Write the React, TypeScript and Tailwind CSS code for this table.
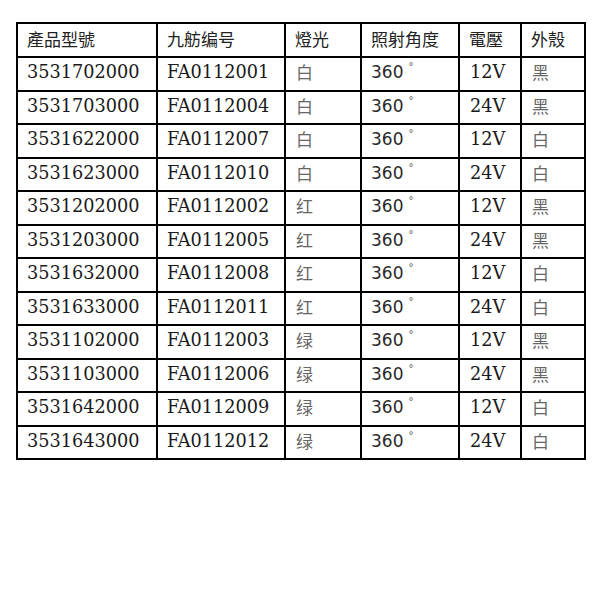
import React from 'react';

const rows: [string, string, string, string, string][] = [
  ['3531702000', 'FA0112001', '白', '12V', '黑'],
  ['3531703000', 'FA0112004', '白', '24V', '黑'],
  ['3531622000', 'FA0112007', '白', '12V', '白'],
  ['3531623000', 'FA0112010', '白', '24V', '白'],
  ['3531202000', 'FA0112002', '红', '12V', '黑'],
  ['3531203000', 'FA0112005', '红', '24V', '黑'],
  ['3531632000', 'FA0112008', '红', '12V', '白'],
  ['3531633000', 'FA0112011', '红', '24V', '白'],
  ['3531102000', 'FA0112003', '绿', '12V', '黑'],
  ['3531103000', 'FA0112006', '绿', '24V', '黑'],
  ['3531642000', 'FA0112009', '绿', '12V', '白'],
  ['3531643000', 'FA0112012', '绿', '24V', '白'],
];

const headers = ['產品型號', '九舫编号', '燈光', '照射角度', '電壓', '外殼'];
const widths = ['w-[140px]', 'w-[128px]', 'w-[76px]', 'w-[98px]', 'w-[62px]', 'w-[64px]'];

const cjk = "font-['Noto_Sans_CJK_TC','Noto_Sans_CJK_SC',sans-serif]";
const serif = "font-['DejaVu_Serif',serif] text-[17.7px] text-[#1a1a1a]";
const cell = 'border-r-2 border-b-2 border-black pl-[9px] align-middle whitespace-nowrap';

export default function App() {
  return (
    <div className="w-[600px] h-[600px] bg-white pt-[22px] pl-[16px]">
      <table className="table-fixed border-separate border-spacing-0 border-l-2 border-t-2 border-black">
        <thead>
          <tr>
            {headers.map((h, i) => (
              <th
                key={h}
                className={`${cell} ${widths[i]} h-[34px] pb-[2px] text-left font-normal text-[17px] text-[#222] ${cjk}`}
              >
                {h}
              </th>
            ))}
          </tr>
        </thead>
        <tbody>
          {rows.map((r) => (
            <tr key={r[0]}>
              <td className={`${cell} h-[33.5px] pb-[2px] ${serif}`}>{r[0]}</td>
              <td className={`${cell} h-[33.5px] pb-[2px] ${serif}`}>{r[1]}</td>
              <td className={`${cell} h-[33.5px] pb-[4px] pl-[10px] text-[17px] text-[#666] ${cjk}`}>{r[2]}</td>
              <td className={`${cell} h-[33.5px] pb-[2px] pl-[8px] font-['DejaVu_Sans',sans-serif] text-[17px] text-[#2a2a2a]`}>
                360
                <span className="relative -top-[8px] ml-[5px] text-[10px] text-[#555]">°</span>
              </td>
              <td className={`${cell} h-[33.5px] pb-[2px] pl-[10px] ${serif}`}>{r[3]}</td>
              <td className={`${cell} h-[33.5px] pb-[4px] pl-[10px] text-[17px] text-[#666] ${cjk}`}>{r[4]}</td>
            </tr>
          ))}
        </tbody>
      </table>
    </div>
  );
}
